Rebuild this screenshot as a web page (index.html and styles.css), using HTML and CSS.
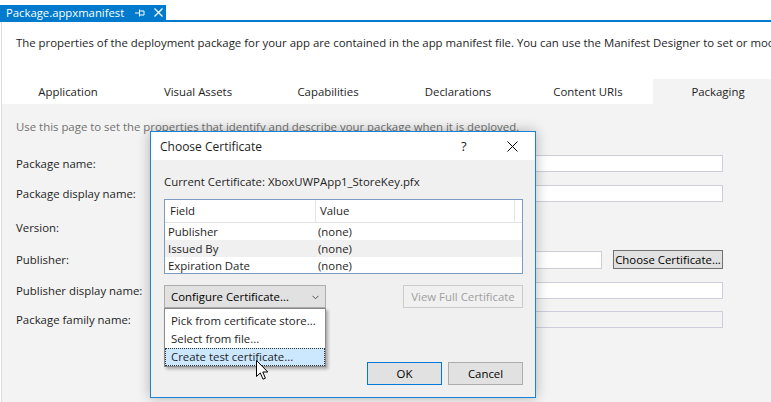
FILE: index.html
```html
<!DOCTYPE html>
<html>
<head>
<meta charset="utf-8">
<link rel="stylesheet" href="styles.css">
</head>
<body>
<div class="doc-strip">
  <div class="doc-tab">
    <span class="doc-title">Package.appxmanifest</span>
    <svg class="pin" width="10" height="8" viewBox="0 0 10 8"><path d="M0 4H4M4.5 0.5V7.5M5 2H9V6H5" fill="none" stroke="#fff" stroke-width="1"/></svg>
    <svg class="doc-close" width="9" height="9" viewBox="0 0 9 9"><path d="M0.5 0.5L8.5 8.5M8.5 0.5L0.5 8.5" stroke="#fff" stroke-width="1.3"/></svg>
  </div>
</div>
<div class="doc-line"></div>
<main class="designer">
  <p class="intro">The properties of the deployment package for your app are contained in the app manifest file. You can use the Manifest Designer to set or modify one or more of the properties.</p>
  <nav class="tabs">
    <span class="tab">Application</span>
    <span class="tab">Visual Assets</span>
    <span class="tab">Capabilities</span>
    <span class="tab">Declarations</span>
    <span class="tab">Content URIs</span>
    <span class="tab tab-active">Packaging</span>
  </nav>
  <section class="panel">
    <p class="hint">Use this page to set the properties that identify and describe your package when it is deployed.</p>
    <div class="form">
      <span class="label">Package name:</span><span class="input"></span>
      <span class="label">Package display name:</span><span class="input"></span>
      <span class="label">Version:</span><span></span>
      <span class="label label-tall">Publisher:</span>
      <span class="pub-row"><span class="input input-pub"></span><span class="btn btn-choose">Choose Certificate...</span></span>
      <span class="label">Publisher display name:</span><span class="input"></span>
      <span class="label">Package family name:</span><span class="input input-disabled"></span>
    </div>
  </section>
</main>

<div class="dialog">
  <div class="dlg-title">
    <span class="dlg-caption">Choose Certificate</span>
    <span class="dlg-help">?</span>
    <svg class="dlg-close" width="11" height="11" viewBox="0 0 11 11"><path d="M0.5 0.5L10.5 10.5M10.5 0.5L0.5 10.5" stroke="#000" stroke-width="1"/></svg>
  </div>
  <div class="dlg-body">
    <p class="current">Current Certificate: XboxUWPApp1_StoreKey.pfx</p>
    <div class="grid">
      <div class="grid-head">
        <span class="c1">Field</span><span class="c2">Value</span><span class="c3"></span>
      </div>
      <div class="grid-row"><span class="c1">Publisher</span><span class="c2">(none)</span></div>
      <div class="grid-row grid-row-alt"><span class="c1">Issued By</span><span class="c2">(none)</span></div>
      <div class="grid-row"><span class="c1">Expiration Date</span><span class="c2">(none)</span></div>
    </div>
    <div class="actions">
      <span class="btn btn-config">Configure Certificate...
        <svg class="chev" width="7" height="5" viewBox="0 0 7 5"><path d="M0.5 0.8L3.5 3.8L6.5 0.8" fill="none" stroke="#555" stroke-width="1"/></svg>
      </span>
      <span class="btn btn-disabled">View Full Certificate</span>
    </div>
    <div class="footer">
      <span class="btn btn-ok">OK</span>
      <span class="btn btn-cancel">Cancel</span>
    </div>
  </div>
  <div class="menu">
    <div class="menu-item">Pick from certificate store...</div>
    <div class="menu-item">Select from file...</div>
    <div class="menu-item menu-item-hot">Create test certificate...</div>
  </div>
</div>

<svg class="cursor" width="13" height="21" viewBox="0 0 13 21"><path d="M0.5 0.5V16.5L4.3 12.9L7 19.2L9.4 18.2L6.8 12H11.8Z" fill="#fff" stroke="#000" stroke-width="1" stroke-linejoin="miter"/></svg>
</body>
</html>
```

FILE: styles.css
```css
* { box-sizing: border-box; }
html, body { margin: 0; padding: 0; }
body {
  width: 771px;
  height: 402px;
  overflow: hidden;
  position: relative;
  background: #fff;
  font-family: "Open Sans", "Noto Sans", sans-serif;
  font-size: 11.4px;
  color: #1e1e1e;
}
p { margin: 0; }

.doc-strip { height: 20px; display: flex; align-items: flex-end; }
.doc-tab {
  height: 15px;
  width: 166px;
  background: #007acc;
  color: #fff;
  display: flex;
  align-items: center;
  padding-left: 6px;
  font-size: 11.3px;
}
.doc-title { line-height: 15px; }
.pin { margin-left: 11px; }
.doc-close { margin-left: 9px; }
.doc-line { height: 2px; background: #007acc; }

.designer {
  border-left: 1px solid #dcdcdc;
  margin-left: 1px;
  overflow: hidden;
}
.intro {
  white-space: nowrap;
  overflow: hidden;
  padding: 13px 0 0 14px;
  line-height: 16px;
  height: 57px;
}
.tabs { display: flex; height: 25px; padding-left: 1px; }
.tab {
  width: 130px;
  flex: none;
  text-align: center;
  line-height: 26px;
}
.tab-active { background: #f3f3f3; }

.panel {
  background: #f3f3f3;
  height: 298px;
  padding: 15px 48px 0 14px;
}
.hint { color: #717171; line-height: 16px; white-space: nowrap; }
.form {
  margin-top: 20px;
  display: grid;
  grid-template-columns: 144px 1fr;
  grid-template-rows: 30px 34px 31px 32px 29px 18px;
  align-items: start;
}
.label { line-height: 18px; }
.label-tall { line-height: 20px; }
.input {
  display: block;
  height: 17px;
  background: #fff;
  border: 1px solid #cccedb;
}
.input-disabled { background: #f3f3f3; }
.pub-row { display: flex; gap: 11px; height: 20px; }
.input-pub { flex: 1; height: 18px; margin-top: 1px; }

.btn {
  display: flex;
  align-items: center;
  justify-content: center;
  background: #e1e1e1;
  border: 1px solid #adadad;
  height: 23px;
  white-space: nowrap;
  color: #000;
}
.btn-choose {
  width: 110px;
  height: 19px;
  border-color: #707070;
}

.dialog {
  position: absolute;
  left: 150px;
  top: 131px;
  width: 386px;
  height: 267px;
  border: 1px solid #1883d7;
  background: #f0f0f0;
  box-shadow: 0 0 12px rgba(0, 0, 0, 0.28);
  display: flex;
  flex-direction: column;
}
.dlg-title {
  height: 28px;
  background: #fff;
  display: flex;
  align-items: center;
  padding-left: 9px;
  font-size: 12px;
}
.dlg-caption { flex: 1; }
.dlg-help { width: 10px; margin-right: 36px; font-size: 13px; }
.dlg-close { margin-right: 17px; }
.dlg-body {
  flex: 1;
  display: flex;
  flex-direction: column;
  padding: 14px 12px 12px 13px;
}
.current { line-height: 16px; }
.grid {
  margin-top: 9px;
  height: 75px;
  border: 1px solid #7c9bc3;
  background: #fff;
}
.grid-head {
  display: flex;
  height: 23px;
  border-bottom: 1px solid #e2e2e2;
  align-items: stretch;
}
.grid-head .c1 { width: 151px; padding-left: 5px; border-right: 1px solid #e5e5e5; line-height: 22px; }
.grid-head .c2 { width: 199px; padding-left: 4px; border-right: 1px solid #e5e5e5; line-height: 22px; }
.grid-head .c3 { flex: 1; }
.grid-row { display: flex; height: 17px; line-height: 17px; }
.grid-row-alt { background: #f0f0f0; }
.grid-row .c1 { width: 151px; padding-left: 3px; }
.grid-row .c2 { padding-left: 2px; }

.actions {
  margin-top: 11px;
  display: flex;
  justify-content: space-between;
}
.btn-config {
  width: 162px;
  justify-content: flex-start;
  padding-left: 6px;
  position: relative;
}
.chev { position: absolute; right: 6px; top: 9px; }
.btn-disabled {
  width: 120px;
  background: #f0f0f0;
  border-color: #cccccc;
  color: #a0a0a0;
}
.footer {
  margin-top: auto;
  display: flex;
  justify-content: flex-end;
  gap: 6px;
}
.btn-ok { width: 75px; border-color: #0078d7; }
.btn-cancel { width: 75px; }

.menu {
  position: absolute;
  left: 13px;
  top: 176px;
  width: 162px;
  height: 59px;
  background: #fff;
  border: 1px solid #8a8a8a;
  padding-top: 3px;
  box-shadow: 2px 2px 3px rgba(0, 0, 0, 0.3);
}
.menu-item { height: 18px; line-height: 18px; padding-left: 6px; white-space: nowrap; }
.menu-item-hot {
  background: #cce8ff;
  border: 1px dotted #333;
  padding-left: 5px;
  line-height: 16px;
}
.cursor { position: absolute; left: 256px; top: 360px; }
```
